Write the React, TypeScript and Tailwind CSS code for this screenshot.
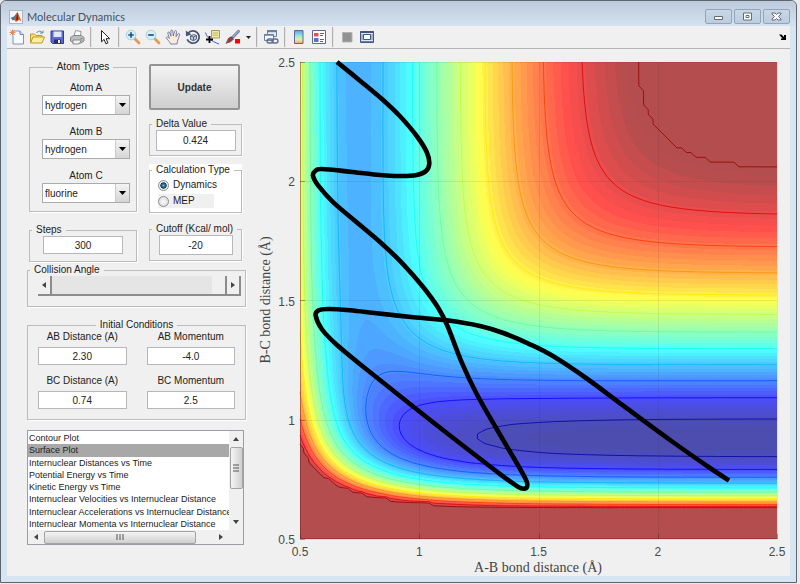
import { useMemo, useState } from "react";
import type { ReactNode } from "react";

const PLOT = 477;
const GRID = 100;
const V_MIN = -141.2;
const CUTOFF = -21.8;
const SATO = 0.18;

const HH = { d: 109.5, beta: 1.942, r0: 0.7419 };
const HF = { d: 141.2, beta: 2.2187, r0: 0.917 };

type Pair = typeof HH;

function pairTerms({ d, beta, r0 }: Pair, r: number) {
  const e = Math.exp(-beta * (r - r0));
  const singlet = d * (e * e - 2 * e);
  const triplet = (d / 2) * (e * e + 2 * e);
  return {
    q: (singlet + triplet + SATO * (singlet - triplet)) / 2 / (1 + SATO),
    j: (singlet - triplet + SATO * (singlet + triplet)) / 2 / (1 + SATO),
  };
}

// collinear LEPS surface, r in angstrom, energy in kcal/mol
function potential(ab: number, bc: number) {
  const a = pairTerms(HH, ab);
  const b = pairTerms(HF, bc);
  const c = pairTerms(HF, ab + bc);
  const root = Math.sqrt(((a.j - b.j) ** 2 + (b.j - c.j) ** 2 + (a.j - c.j) ** 2) / 2);
  return a.q + b.q + c.q - root;
}

function jet(v: number, alpha: number) {
  const t = Math.min(0.98, Math.max(0.015, (v - V_MIN) / (CUTOFF - V_MIN)));
  const channel = (center: number) => {
    const c = Math.min(1, Math.max(0, 1.5 - Math.abs(4 * t - center)));
    return Math.round(255 * (c * alpha + 1 - alpha));
  };
  return `rgb(${channel(3)},${channel(2)},${channel(1)})`;
}

function buildBands() {
  const count = 58;
  const step = (CUTOFF - V_MIN) / count;
  const paths: string[] = Array.from({ length: count }, () => "");
  for (let y = 0; y < PLOT; y++) {
    const bc = 2.5 - (2 * (y + 0.5)) / PLOT;
    let start = 0;
    let current = -1;
    for (let x = 0; x <= PLOT; x++) {
      const v = potential(0.5 + (2 * (x + 0.5)) / PLOT, bc);
      const band = x === PLOT ? -1 : Math.min(count - 1, Math.max(0, Math.floor((v - V_MIN) / step)));
      if (band !== current) {
        if (current >= 0) paths[current] += `M${start} ${y}h${x - start}v1h${start - x}z`;
        start = x;
        current = band;
      }
    }
  }
  return paths.map((d, i) => ({ d, color: jet(V_MIN + (i + 0.5) * step, 0.7) }));
}

function buildContours() {
  const values: number[][] = [];
  for (let j = 0; j <= GRID; j++) {
    values.push([]);
    for (let i = 0; i <= GRID; i++) {
      const v = potential(0.5 + (2 * i) / GRID, 2.5 - (2 * j) / GRID);
      values[j].push(v > CUTOFF ? 0 : v);
    }
  }
  const size = PLOT / GRID;
  const levels = Array.from({ length: 12 }, (_, k) => (k === 11 ? CUTOFF : -136.8 + 10.4 * k));
  return levels.map((level) => {
    let d = "";
    for (let j = 0; j < GRID; j++) {
      for (let i = 0; i < GRID; i++) {
        const corners = [
          [i, j, values[j][i]],
          [i + 1, j, values[j][i + 1]],
          [i + 1, j + 1, values[j + 1][i + 1]],
          [i, j + 1, values[j + 1][i]],
        ];
        const hits: string[] = [];
        corners.forEach((p, n) => {
          const q = corners[(n + 1) % 4];
          if (p[2] < level !== q[2] < level) {
            const t = (level - p[2]) / (q[2] - p[2]);
            hits.push(`${((p[0] + t * (q[0] - p[0])) * size).toFixed(1)} ${((p[1] + t * (q[1] - p[1])) * size).toFixed(1)}`);
          }
        });
        for (let n = 0; n + 1 < hits.length; n += 2) d += `M${hits[n]}L${hits[n + 1]}`;
      }
    }
    return { d, color: jet(level, 1) };
  });
}

const trajectory = [
  [37, 0], [60, 18.7], [83.3, 38.2], [100, 54.3], [116.7, 74], [126.7, 90], [129.3, 101.5], [126, 109], [116.7, 113],
  [100, 114], [76.7, 112.7], [50, 109.7], [21.7, 107], [15, 109.3], [13, 113.7], [18.3, 123.7], [33.3, 140.3],
  [60, 163], [83.3, 183], [103.3, 202.3], [123.3, 225.3], [138.3, 246], [147.5, 264], [161.7, 300.3], [176.7, 332],
  [196.7, 367], [216.7, 401], [225, 415.8], [227.3, 422], [225.7, 426.3], [218.3, 425], [196.7, 409.5], [150, 373.5],
  [110, 342], [66.7, 307.5], [36.7, 282.7], [21.7, 267], [15.7, 253.7], [18.3, 248.5], [28.3, 247], [50, 248.3],
  [76.7, 251.3], [113.3, 255.3], [146.7, 258.3], [180, 264], [203.3, 271], [230, 282.3], [253.3, 294.3], [286.7, 316.5],
  [323.3, 343.7], [370, 378], [410, 406], [429, 418.5],
];

function smoothPath(points: number[][]) {
  let d = `M${points[0].join(" ")}`;
  for (let i = 0; i < points.length - 1; i++) {
    const p0 = points[Math.max(0, i - 1)];
    const p1 = points[i];
    const p2 = points[i + 1];
    const p3 = points[Math.min(points.length - 1, i + 2)];
    d += `C${p1[0] + (p2[0] - p0[0]) / 6} ${p1[1] + (p2[1] - p0[1]) / 6} ${p2[0] - (p3[0] - p1[0]) / 6} ${p2[1] - (p3[1] - p1[1]) / 6} ${p2[0]} ${p2[1]}`;
  }
  return d;
}

const ticks = [0.5, 1, 1.5, 2, 2.5];

function EnergyPlot() {
  const bands = useMemo(buildBands, []);
  const contours = useMemo(buildContours, []);
  return (
    <svg viewBox="0 0 540 527" className="block w-full" role="img" aria-label="Potential energy contour plot">
      <g transform="translate(50 13)">
        <g shapeRendering="crispEdges">
          {bands.map((b, i) => <path key={i} d={b.d} fill={b.color} />)}
        </g>
        {contours.map((c, i) => <path key={i} d={c.d} stroke={c.color} strokeWidth="1" strokeOpacity="0.8" fill="none" />)}
        {ticks.map((t) => {
          const p = Math.round(((t - 0.5) / 2) * PLOT);
          return (
            <g key={t} stroke="#262626" shapeRendering="crispEdges">
              <path d={`M${p + 0.5} 0V${PLOT}M0 ${PLOT - p + 0.5}H${PLOT}`} strokeOpacity="0.09" />
              <path d={`M${p + 0.5} ${PLOT}v-5M0 ${PLOT - p + 0.5}h5`} strokeOpacity="0.4" />
            </g>
          );
        })}
        <path d={`M0.5 0V${PLOT - 0.5}H${PLOT}`} fill="none" stroke="#7a2020" strokeOpacity="0.45" />
        <path d={smoothPath(trajectory)} fill="none" stroke="#000" strokeWidth="4.6" strokeLinejoin="round" />
      </g>
      <g fill="#4a4a4a" fontSize="12" fontFamily="Liberation Sans, Arial, sans-serif">
        {ticks.map((t) => (
          <text key={t} x={50 + ((t - 0.5) / 2) * PLOT} y="507" textAnchor="middle">{t}</text>
        ))}
        {ticks.map((t) => (
          <text key={t} x="45" y={495 - ((t - 0.5) / 2) * PLOT} textAnchor="end">{t}</text>
        ))}
      </g>
      <g fill="#444" fontSize="14" fontFamily="Liberation Serif, Times New Roman, serif" textAnchor="middle">
        <text x="288" y="523">A-B bond distance (Å)</text>
        <text transform="translate(20 251) rotate(-90)">B-C bond distance (Å)</text>
      </g>
    </svg>
  );
}

function MatlabLogo() {
  return (
    <svg viewBox="0 0 14 14" className="size-3.5">
      <rect x=".5" y=".5" width="13" height="13" fill="#f4f7fa" stroke="#aab7c6" />
      <path d="M1.5 8 5 6.5 8.5 2 7 9l-3 1.5z" fill="#3d79ad" />
      <path d="M5 9.5 8.5 2l4 9.5-2.3-1.8L7 12z" fill="#d9531e" />
      <path d="M8.5 2 7 9.5 9 10z" fill="#6e1c12" />
    </svg>
  );
}

const icons: Record<string, ReactNode> = {
  New: (
    <>
      <path d="M4 2h7l3.5 3.5V15H4z" fill="#f8fbff" stroke="#7d93c2" />
      <path d="M11 2v3.5h3.5" fill="#dbe5f6" stroke="#6c84b8" />
      <path d="M3.5 .5v6M.5 3.5h6M1.4 1.4l4.2 4.2M5.6 1.4 1.4 5.6" stroke="#e58a60" />
    </>
  ),
  Open: (
    <>
      <path d="M1.5 14V5h4L7 6.5h6V8" fill="#f6df75" stroke="#bd9a2c" />
      <path d="M1.5 14 4 8h11.5L13 14z" fill="#ffee9a" stroke="#bd9a2c" />
      <path d="M7.5 3.5q3.5-3 6 0M14 1.5V4h-3" fill="none" stroke="#6d87ab" />
    </>
  ),
  Save: (
    <>
      <path d="M2 2h12.5v12.5h-11L2 13z" fill="#5d69cf" stroke="#333b96" />
      <path d="M4.5 2.5h8v5.5h-8z" fill="#dfe8ff" />
      <path d="M5 10.5h7V14H5z" fill="#272c70" />
      <path d="M9 11h2v3H9z" fill="#eef" />
    </>
  ),
  Print: (
    <>
      <path d="M5 7.5 6.5 1.5 12 2.5 11.5 8" fill="#fff" stroke="#8c96a8" />
      <path d="m1.5 8.5 3-2h8l2.5 2v3.5l-3 2h-7l-3.5-2z" fill="#bcbec1" stroke="#85878a" />
      <path d="M4 11h8.5L10 15H4z" fill="#f2f2f2" stroke="#88898b" />
      <path d="M11.5 9.5h2" stroke="#4b9e4b" />
    </>
  ),
  "Edit plot": <path d="M4.5 1.5v11.3l2.6-2.4 1.8 4.4 2-.8-1.8-4.3h3.6z" fill="#fff" stroke="#222" />,
  "Zoom in": (
    <>
      <path d="m9.5 9.5 4.5 4.5" stroke="#df9b51" strokeWidth="2.8" strokeLinecap="round" />
      <circle cx="6" cy="6" r="4.8" fill="#d4f1fb" stroke="#a9cfe0" />
      <path d="M3.2 6h5.6M6 3.2v5.6" stroke="#24528d" strokeWidth="1.7" />
    </>
  ),
  "Zoom out": (
    <>
      <path d="m9.5 9.5 4.5 4.5" stroke="#df9b51" strokeWidth="2.8" strokeLinecap="round" />
      <circle cx="6" cy="6" r="4.8" fill="#d4f1fb" stroke="#a9cfe0" />
      <path d="M3.2 6h5.6" stroke="#24528d" strokeWidth="1.7" />
    </>
  ),
  Pan: (
    <path
      d="M5.5 15C5 12.5 2.3 11 1.2 8.5c.5-1.3 2-.6 3.2 1L2.7 4c.2-1.3 1.6-1.3 2 0L6 7.2 5.8 2c.2-1.3 1.8-1.3 2 0l.5 5L9.6 2.3c.4-1.2 1.9-.9 1.9.4L11 7.8l1.9-2.9c.8-1.1 2-.3 1.7.9L12.5 12l-.5 3z"
      fill="#ffeadb" stroke="#6a78a2" strokeWidth=".9"
    />
  ),
  "Rotate 3D": (
    <>
      <path d="M3 4.2a6.2 6.2 0 1 1-.8 6.2" fill="none" stroke="#465776" strokeWidth="1.8" />
      <path d="M.8 1.5 1 7.2 6.5 5.5z" fill="#465776" />
      <path d="m5.5 7 3-1.5 3 1v3.5l-3 1.7-3-1.2z" fill="#c4cad5" stroke="#59657d" />
      <path d="m5.5 7 3 1 3-1.5M8.5 8v3.5" fill="none" stroke="#59657d" />
    </>
  ),
  "Data cursor": (
    <>
      <path d="M.5 3.5C2 9 6 12 14 15" fill="none" stroke="#4e55e5" />
      <path d="M6.5 1.5h8v7.5h-8z" fill="#eee9a5" stroke="#a49b60" />
      <path d="M8 4h5M8 6.2h5" stroke="#bdb678" />
      <path d="M4.5 7v7M1 10.5h7" stroke="#000" strokeWidth="1.8" />
    </>
  ),
  Brush: (
    <>
      <path d="M13.5 2.2 7.5 8.5" stroke="#6d79a8" strokeWidth="2.8" strokeLinecap="round" />
      <path d="M13.5 2 8 7.8" stroke="#c3cbe4" strokeLinecap="round" />
      <path d="m6.2 7.8 2.3 2.3-2.2 2.2C4.5 14 2.6 13 1 14.5c1.2-2 1.6-4.2 2.8-5.4z" fill="#8d4640" stroke="#5c3330" strokeWidth=".6" />
      <path d="M10 10h5v4.5h-5z" fill="#f00" />
    </>
  ),
  "Link plot": (
    <>
      <path d="M4.5 1.5h9v6h-9z" fill="#e5edf8" stroke="#6680a8" />
      <path d="M4 2.2h10" stroke="#6680a8" strokeWidth="2" />
      <path d="M1.5 5.5h9v6h-9z" fill="#f7faff" stroke="#6680a8" />
      <path d="M1 6h10" stroke="#6680a8" strokeWidth="1.5" />
      <rect x="4" y="10" width="6" height="4" rx="2" fill="none" stroke="#5e6e90" strokeWidth="1.4" />
      <rect x="9" y="10" width="6" height="4" rx="2" fill="none" stroke="#5e6e90" strokeWidth="1.4" />
    </>
  ),
  Colorbar: (
    <>
      <defs>
        <linearGradient id="cbar" x2="0" y2="1">
          <stop stopColor="#6a9de6" />
          <stop offset=".4" stopColor="#8fe9dc" />
          <stop offset=".7" stopColor="#f0ec94" />
          <stop offset="1" stopColor="#f0a070" />
        </linearGradient>
      </defs>
      <path d="M3.5 1.5h8.5v13H3.5z" fill="url(#cbar)" stroke="#586ca0" />
    </>
  ),
  Legend: (
    <>
      <path d="M1.5 1.5h13v13h-13z" fill="#fff" stroke="#596b96" />
      <path d="M3 4h4.5v3.5H3z" fill="#e2554d" />
      <path d="M3 9h4.5v4H3z" fill="#5d68e6" />
      <path d="M9 4.5h4M9 6.5h3M9 10.5h4M9 12.5h3" stroke="#666" />
    </>
  ),
  "Hide tools": <path d="M3.5 3.5h9.5v9.5H3.5z" fill="#929292" stroke="#b3b3b3" />,
  "Show tools": (
    <>
      <path d="M1.5 2.5h13v11h-13z" fill="#dce4f2" stroke="#3f5686" />
      <path d="M1.5 3h13" stroke="#3f5686" strokeWidth="2" />
      <path d="M4.5 5.5h7v5h-7z" fill="#fff" stroke="#3f5686" />
      <path d="M2 12.5h12M3 5v6M13 5v6" stroke="#70809f" />
    </>
  ),
};

function Tool({ name }: { name: string }) {
  return (
    <button aria-label={name} className="flex w-5 justify-center">
      <svg viewBox="0 0 16 16" className="size-4" fill="none">{icons[name]}</svg>
    </button>
  );
}

function Separator() {
  return <div className="mx-[3px] h-5 w-0.5 border-l border-[#b0b0b0] bg-[#e4e4e4]" />;
}

function Toolbar() {
  return (
    <div className="flex h-[23px] items-center border-b border-[#b5b5b5] bg-[#f0f0f0]">
      {["New", "Open", "Save", "Print"].map((n) => <Tool key={n} name={n} />)}
      <Separator />
      <Tool name="Edit plot" />
      <Separator />
      {["Zoom in", "Zoom out", "Pan", "Rotate 3D", "Data cursor", "Brush"].map((n) => <Tool key={n} name={n} />)}
      <button aria-label="Brush options" className="flex w-2.5 justify-center">
        <svg viewBox="0 0 5 3" className="h-[3px] w-[5px]"><path d="M0 0h5L2.5 3z" fill="#222" /></svg>
      </button>
      <Separator />
      <Tool name="Link plot" />
      <Separator />
      <Tool name="Colorbar" />
      <Tool name="Legend" />
      <Separator />
      <Tool name="Hide tools" />
      <Tool name="Show tools" />
      <button aria-label="Dock figure" className="mr-1 ml-auto">
        <svg viewBox="0 0 7 6" className="h-1.5 w-[7px]"><path d="M0 .5h2.5L5 3V1h2v5H2V4.5h1.5z" fill="#000" /></svg>
      </button>
    </div>
  );
}

function CaptionButton({ label, children }: { label: string; children: ReactNode }) {
  return (
    <button
      aria-label={label}
      className="flex h-[15px] w-[27px] items-center justify-center rounded-xs border border-[#93a5bd] bg-linear-to-b from-[#c9d7e7] to-[#bccddf]"
    >
      <svg viewBox="0 0 11 9" className="h-[9px] w-[11px]" fill="#fff" stroke="#606a7c">{children}</svg>
    </button>
  );
}

function Group({ title, className = "", center = false, children }: { title: string; className?: string; center?: boolean; children: ReactNode }) {
  return (
    <fieldset className={`min-w-0 border border-[#bcbcbc] shadow-[1px_1px_0_#fff] ${className}`}>
      <legend className={`px-1 leading-3 whitespace-nowrap ${center ? "mx-auto" : "ml-0.5"}`}>{title}</legend>
      {children}
    </fieldset>
  );
}

function AtomSelect({ label, initial }: { label: string; initial: string }) {
  return (
    <label className="block w-[88px]">
      <span className="block text-center leading-[14px]">{label}</span>
      <span className="relative block">
        <select
          defaultValue={initial}
          className="block h-5 w-full appearance-none border border-[#a9abae] bg-white pl-0.5"
        >
          <option>hydrogen</option>
          <option>fluorine</option>
        </select>
        <span className="pointer-events-none absolute inset-y-px right-px flex w-3.5 items-center justify-center border-l border-[#ccc] bg-linear-to-b from-[#f4f4f4] to-[#d5d5d5]">
          <svg viewBox="0 0 7 4" className="h-1 w-[7px]"><path d="M0 0h7L3.5 4z" /></svg>
        </span>
      </span>
    </label>
  );
}

function ValueInput({ label, value, className = "" }: { label: string; value: string; className?: string }) {
  return (
    <input
      aria-label={label}
      defaultValue={value}
      className={`block border border-[#b5b8bd] bg-white text-center ${className}`}
    />
  );
}

function Condition({ label, value }: { label: string; value: string }) {
  return (
    <label className="block">
      <span className="block pb-1 text-center leading-3">{label}</span>
      <input defaultValue={value} className="block h-[18px] w-full border border-[#b5b8bd] bg-white text-center" />
    </label>
  );
}

function Arrow({ d }: { d: string }) {
  return <svg viewBox="0 0 6 6" className="size-1.5" fill="#444"><path d={d} /></svg>;
}

function CollisionAngle() {
  const button = "flex w-3.5 items-center justify-center border-r-2 border-b-2 border-[#8c8c8c] bg-[#f0f0f0]";
  return (
    <div className="flex h-5">
      <button aria-label="Decrease angle" className={button}><Arrow d="M5 0v6L1 3z" /></button>
      <input
        type="range"
        aria-label="Collision Angle"
        min={0}
        max={180}
        defaultValue={180}
        className="h-full min-w-0 flex-1 appearance-none border-b-2 border-[#8c8c8c] bg-[#e5e5e5] [&::-webkit-slider-thumb]:h-[18px] [&::-webkit-slider-thumb]:w-[15px] [&::-webkit-slider-thumb]:appearance-none [&::-webkit-slider-thumb]:border-r-2 [&::-webkit-slider-thumb]:border-[#8c8c8c] [&::-webkit-slider-thumb]:bg-[#f0f0f0]"
      />
      <button aria-label="Increase angle" className={button}><Arrow d="M1 0v6l4-3z" /></button>
    </div>
  );
}

const plotTypes = [
  "Contour Plot",
  "Surface Plot",
  "Internuclear Distances vs Time",
  "Potential Energy vs Time",
  "Kinetic Energy vs Time",
  "Internuclear Velocities vs Internuclear Distance",
  "Internuclear Accelerations vs Internuclear Distance",
  "Internuclear Momenta vs Internuclear Distance",
];

function PlotList() {
  const [selected, setSelected] = useState("Surface Plot");
  return (
    <div className="grid grid-cols-[1fr_14px] grid-rows-[99px_14px] border border-[#9a9ea6] bg-[#f0f0f0]">
      <ul role="listbox" aria-label="Plot type" className="flex min-w-0 flex-col overflow-hidden bg-white pt-px text-[9px]">
        {plotTypes.map((p) => (
          <li
            key={p}
            role="option"
            aria-selected={p === selected}
            onClick={() => setSelected(p)}
            className={`flex-1 overflow-hidden pl-px leading-3 whitespace-nowrap ${p === selected ? "bg-[#a8a8a8]" : ""}`}
          >
            {p}
          </li>
        ))}
      </ul>
      <div className="flex flex-col items-center">
        <button aria-label="Scroll up" className="flex h-4 items-center"><Arrow d="M0 5h6L3 1z" /></button>
        <div className="flex h-[42px] w-[13px] items-center justify-center rounded-xs border border-[#a3a3a3] bg-linear-to-r from-[#f5f5f5] to-[#cfcfcf]">
          <svg viewBox="0 0 6 8" className="h-2 w-1.5"><path d="M0 1h6M0 4h6M0 7h6" stroke="#555" /></svg>
        </div>
        <button aria-label="Scroll down" className="mt-auto flex h-4 items-center"><Arrow d="M0 1h6L3 5z" /></button>
      </div>
      <div className="flex items-center">
        <button aria-label="Scroll left" className="flex w-4 justify-center"><Arrow d="M5 0v6L1 3z" /></button>
        <div className="flex h-[13px] w-[152px] items-center justify-center rounded-xs border border-[#a3a3a3] bg-linear-to-b from-[#f5f5f5] to-[#cfcfcf]">
          <svg viewBox="0 0 8 6" className="h-1.5 w-2"><path d="M1 0v6M4 0v6M7 0v6" stroke="#555" /></svg>
        </div>
        <button aria-label="Scroll right" className="ml-auto flex w-4 justify-center"><Arrow d="M1 0v6l4-3z" /></button>
      </div>
    </div>
  );
}

function Controls() {
  const radio = "size-[11px] appearance-none rounded-full border border-[#8d8d8d] bg-[radial-gradient(circle,#fafafa,#d5d5d5)] checked:bg-[radial-gradient(circle,#59b7df_0,#123b5c_45%,#eee_55%)]";
  return (
    <div className="w-[243px] shrink-0 pt-3 pr-1 pl-5">
      <div className="flex justify-between pr-1 pl-0.5">
        <div className="flex w-[108px] flex-col gap-3">
          <Group title="Atom Types" center className="h-[151px]">
            <div className="mt-2 flex flex-col items-center gap-2.5 pl-1.5">
              <AtomSelect label="Atom A" initial="hydrogen" />
              <AtomSelect label="Atom B" initial="hydrogen" />
              <AtomSelect label="Atom C" initial="fluorine" />
            </div>
          </Group>
          <Group title="Steps" className="h-[38px]">
            <ValueInput label="Steps" value="300" className="mx-auto h-[18px] w-20" />
          </Group>
        </div>
        <div className="flex w-[93px] flex-col pt-[3px]">
          <button className="h-[46px] w-[91px] rounded-xs border-2 border-[#949494] bg-linear-to-b from-[#f3f3f3] to-[#cfcfcf] font-bold text-[#333]">
            Update
          </button>
          <Group title="Delta Value" className="mt-2 h-[38px]">
            <ValueInput label="Delta Value" value="0.424" className="mx-auto h-[21px] w-20" />
          </Group>
          <div className="mt-2 bg-white">
            <Group title="Calculation Type" className="h-[49px]">
              <div className="flex flex-col gap-0.5 pt-0.5 pl-2">
                <label className="flex items-center gap-1 leading-[14px]">
                  <input type="radio" name="calc" defaultChecked className={radio} />
                  Dynamics
                </label>
                <label className="flex w-14 items-center gap-1 bg-[#f0f0f0] leading-[14px]">
                  <input type="radio" name="calc" className={radio} />
                  MEP
                </label>
              </div>
            </Group>
          </div>
          <Group title="Cutoff (Kcal/ mol)" className="mt-2.5 h-[38px]">
            <ValueInput label="Cutoff (Kcal/ mol)" value="-20" className="mx-auto h-5 w-[74px]" />
          </Group>
        </div>
      </div>
      <Group title="Collision Angle" className="mt-0.5 h-[43px]">
        <div className="pr-1 pl-2.5"><CollisionAngle /></div>
      </Group>
      <Group title="Initial Conditions" center className="mt-3 h-[101px]">
        <div className="grid grid-cols-2 gap-x-5 gap-y-2.5 px-2.5">
          <Condition label="AB Distance (A)" value="2.30" />
          <Condition label="AB Momentum" value="-4.0" />
          <Condition label="BC Distance (A)" value="0.74" />
          <Condition label="BC Momentum" value="2.5" />
        </div>
      </Group>
      <div className="mt-2.5 pr-0.5"><PlotList /></div>
    </div>
  );
}

export default function App() {
  return (
    <div className="bg-[#e8eaec] pr-[3px] pb-px font-['Liberation_Sans',Arial,sans-serif] text-[10px] text-[#222]">
      <main className="rounded-t-md border border-[#5d6670] bg-[#d7e4f1] px-1.5 pb-1.5">
        <header className="-mx-1.5 flex h-[25px] items-center rounded-t-md bg-linear-to-b from-[#bccadb] to-[#d5e2f0] pt-1.5 pr-1.5 pl-2">
          <MatlabLogo />
          <h1 className="pl-1 font-[Lato,sans-serif] text-[11px] leading-4 text-[#45525f]">Molecular Dynamics</h1>
          <div className="ml-auto flex gap-0.5">
            <CaptionButton label="Minimize"><path d="M1.5 4.5h8v3h-8z" /></CaptionButton>
            <CaptionButton label="Restore"><path d="M1.5 1h8v7h-8zM4 3.5h3v2H4z" /></CaptionButton>
            <CaptionButton label="Close"><path d="M1 1h3l1.5 1.5L7 1h3v1L7.5 4.5 10 7v1H7L5.5 6.5 4 8H1V7l2.5-2.5L1 2z" /></CaptionButton>
          </div>
        </header>
        <Toolbar />
        <div className="flex bg-[#f0f0f0]">
          <Controls />
          <div className="min-w-0 flex-1"><EnergyPlot /></div>
        </div>
      </main>
    </div>
  );
}
